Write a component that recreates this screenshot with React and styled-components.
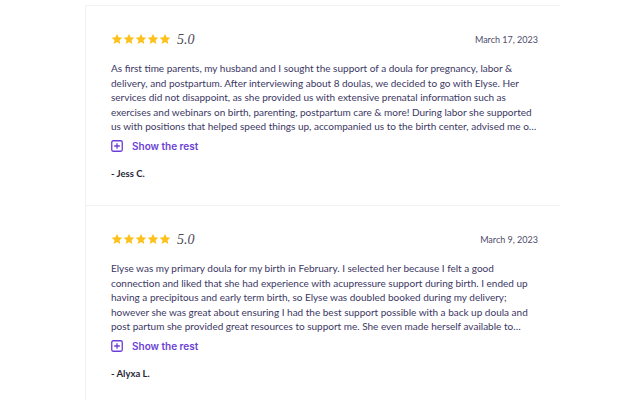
import React from 'react';
import styled, { createGlobalStyle } from 'styled-components';

const GlobalStyle = createGlobalStyle`
  html, body {
    margin: 0;
    padding: 0;
    background: #fff;
  }
  body {
    font-family: Lato, "Open Sans", sans-serif;
  }
`

const Page = styled.div`
  padding-top: 5px;
  height: 395px;
  overflow: hidden;
`

const ReviewList = styled.section`
  margin-left: 85px;
  width: 474px;
  border-top: 1px solid #f2f2f4;
  border-left: 1px solid #f2f2f4;
  min-height: 400px;
`

const Review = styled.article`
  box-sizing: border-box;
  height: 200px;
  padding: 24px 21px 0 25px;
  border-bottom: 1px solid #f2f2f4;
  display: flex;
  flex-direction: column;
`

const ReviewHeader = styled.div`
  display: flex;
  align-items: center;
  justify-content: space-between;
  height: 18px;
`

const Rating = styled.div`
  display: flex;
  align-items: center;
`

const Stars = styled.div`
  display: flex;
  gap: 0;
  svg {
    display: block;
  }
`

const Score = styled.span`
  font-family: "Liberation Serif", serif;
  font-style: italic;
  font-size: 14px;
  color: #4a4a55;
  margin-left: 6px;
  margin-top: 1px;
`

const DateText = styled.span`
  font-size: 9px;
  color: #4e4c6a;
  margin-right: 1px;
`

const Body = styled.p`
  margin: 13px 0 0;
  font-size: 10px;
  line-height: 14.6px;
  color: #3b3763;
  display: -webkit-box;
  -webkit-line-clamp: 5;
  -webkit-box-orient: vertical;
  overflow: hidden;
`

const ShowRest = styled.button`
  display: flex;
  align-items: center;
  gap: 9px;
  margin-top: 4px;
  padding: 0;
  border: 0;
  background: none;
  font-family: Inter, sans-serif;
  font-weight: 600;
  font-size: 10px;
  color: #6a3fd6;
  cursor: pointer;
  height: 16px;
  svg {
    display: block;
  }
`

const Author = styled.div`
  margin-top: 14px;
  font-size: 9.5px;
  font-weight: 700;
  color: #2a2838;
`

const Star = () => (
  <svg width="12" height="12" viewBox="0 0 24 24">
    <path
      fill="#fcc21b"
      d="M12 1.5l3.1 7.1 7.7.7-5.8 5.1 1.7 7.6L12 18l-6.7 4 1.7-7.6-5.8-5.1 7.7-.7z"
    />
  </svg>
)

const PlusBox = () => (
  <svg width="12" height="12" viewBox="0 0 12 12" fill="none">
    <rect x="0.75" y="0.75" width="10.5" height="10.5" rx="1.5" stroke="#6a3fd6" strokeWidth="1.3" />
    <path d="M6 3.2v5.6M3.2 6h5.6" stroke="#6a3fd6" strokeWidth="1.3" />
  </svg>
)

const reviews = [
  {
    date: 'March 17, 2023',
    author: '- Jess C.',
    text: 'As first time parents, my husband and I sought the support of a doula for pregnancy, labor & delivery, and postpartum. After interviewing about 8 doulas, we decided to go with Elyse. Her services did not disappoint, as she provided us with extensive prenatal information such as exercises and webinars on birth, parenting, postpartum care & more! During labor she supported us with positions that helped speed things up, accompanied us to the birth center, advised me on when to push and stayed with us after the birth to make sure we were settled.'
  },
  {
    date: 'March 9, 2023',
    author: '- Alyxa L.',
    text: 'Elyse was my primary doula for my birth in February. I selected her because I felt a good connection and liked that she had experience with acupressure support during birth. I ended up having a precipitous and early term birth, so Elyse was doubled booked during my delivery; however she was great about ensuring I had the best support possible with a back up doula and post partum she provided great resources to support me. She even made herself available to answer questions whenever I needed.'
  }
];

export default function App() {
  return (
    <Page>
      <GlobalStyle />
      <ReviewList>
        {reviews.map((r) => (
          <Review key={r.date}>
            <ReviewHeader>
              <Rating>
                <Stars>
                  {[0, 1, 2, 3, 4].map((i) => <Star key={i} />)}
                </Stars>
                <Score>5.0</Score>
              </Rating>
              <DateText>{r.date}</DateText>
            </ReviewHeader>
            <Body>{r.text}</Body>
            <ShowRest>
              <PlusBox />
              Show the rest
            </ShowRest>
            <Author>{r.author}</Author>
          </Review>
        ))}
      </ReviewList>
    </Page>
  );
}
